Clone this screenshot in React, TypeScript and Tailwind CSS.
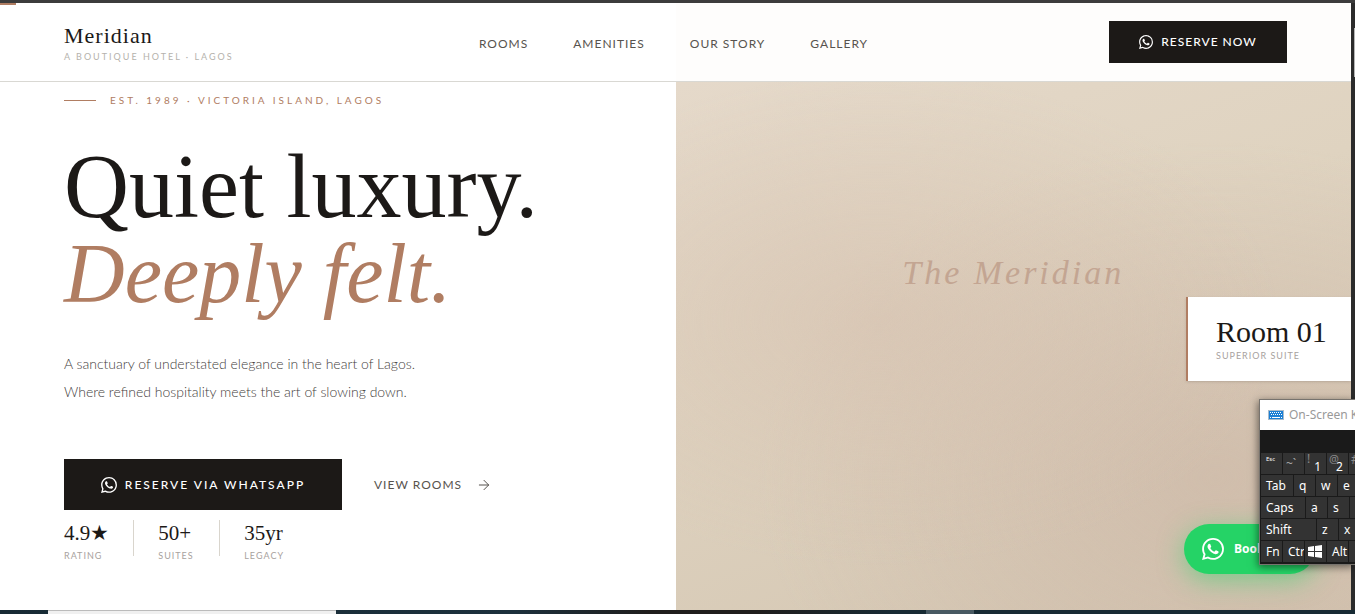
import { SiWhatsapp } from "react-icons/si";
import { ArrowRight } from "lucide-react";

const serif = "font-['Liberation_Serif',serif]";

const navItems = ["Rooms", "Amenities", "Our Story", "Gallery"];

const stats = [
  { value: "4.9★", label: "Rating" },
  { value: "50+", label: "Suites" },
  { value: "35yr", label: "Legacy" },
];

function Header() {
  return (
    <header className="relative flex h-[79px] shrink-0 items-center justify-between border-b border-[#d9d8d3] bg-[linear-gradient(90deg,#fff_50%,#fefdfc_50%)] px-16">
      <div className="absolute left-0 top-0 h-[2px] w-4 bg-[#b07d62]" />
      <a href="#top" className="flex w-[174px] flex-col pt-[2px]">
        <span className={`${serif} text-[22px] leading-[26px] tracking-[1px] text-[#1c1917]`}>Meridian</span>
        <span className="mt-[2px] whitespace-nowrap text-[9px] uppercase leading-[12px] tracking-[2px] text-[#b5b2ac]">
          A Boutique Hotel · Lagos
        </span>
      </a>
      <nav className="flex gap-[45px] pt-1">
        {navItems.map((item) => (
          <a key={item} href="#" className="whitespace-nowrap text-[12px] uppercase leading-[18px] tracking-[1px] text-[#57534e]">
            {item}
          </a>
        ))}
      </nav>
      <button className="flex h-[42px] w-[178px] items-center justify-center gap-2 whitespace-nowrap bg-[#1c1917] text-[12px] font-medium uppercase tracking-[1px] text-white">
        <SiWhatsapp size={14} />
        Reserve Now
      </button>
    </header>
  );
}

function Intro() {
  return (
    <section className="flex flex-col bg-white pl-16 pt-[9px]">
      <p className="flex items-center gap-[14px] whitespace-nowrap text-[10px] uppercase leading-[18px] tracking-[3px] text-[#b07d62]">
        <span className="h-px w-8 bg-[#b07d62]" />
        Est. 1989 · Victoria Island, Lagos
      </p>
      <h1 className={`${serif} mt-[34px] whitespace-nowrap text-[90px] leading-[87px] text-[#1c1917]`}>
        Quiet luxury.
        <em className="block text-[84px] text-[#b07d62]">Deeply felt.</em>
      </h1>
      <p className="mt-[33px] text-[14px] font-light leading-[28px] text-[#44403c]">
        A sanctuary of understated elegance in the heart of Lagos.
        <br />
        Where refined hospitality meets the art of slowing down.
      </p>
      <div className="mt-[53px] flex items-center gap-8">
        <button className="flex h-[51px] w-[278px] items-center justify-center gap-2 whitespace-nowrap bg-[#1c1917] text-[12px] font-medium uppercase tracking-[2px] text-white">
          <SiWhatsapp size={16} />
          Reserve via WhatsApp
        </button>
        <a href="#rooms" className="flex items-center gap-[14px] whitespace-nowrap text-[12px] uppercase tracking-[1px] text-[#57534e]">
          View Rooms
          <ArrowRight size={16} strokeWidth={1.5} />
        </a>
      </div>
      <div className="mt-[10px] flex gap-6">
        {stats.map((stat, index) => (
          <div key={stat.label} className="flex gap-6">
            {index > 0 && <span className="h-9 w-px bg-[#d9d5cd]" />}
            <dl className="flex min-w-[37px] flex-col-reverse justify-end pt-[1px]">
              <dt className="text-[9px] uppercase leading-[12px] tracking-[1px] text-[#a8a29e]">{stat.label}</dt>
              <dd className={`${serif} mb-[5px] text-[21px] leading-[24px] text-[#1c1917]`}>{stat.value}</dd>
            </dl>
          </div>
        ))}
      </div>
    </section>
  );
}

function Showcase() {
  return (
    <section className="relative flex flex-col overflow-hidden bg-[radial-gradient(ellipse_at_30%_45%,#d6c1b099,transparent_60%),radial-gradient(ellipse_at_80%_75%,#cdb8a7b3,transparent_60%),linear-gradient(160deg,#e5d9ca,#dfd3c0_40%,#d3c5b1)]">
      <p className={`${serif} mt-[171px] self-center text-[34px] italic leading-[40px] tracking-[3px] text-[#c3a592]`}>
        The Meridian
      </p>
      <div className="mt-1 flex h-[84px] w-[165px] flex-col self-end border-l-2 border-[#b07d62] bg-white pl-7 pt-[19px] shadow-sm">
        <span className={`${serif} whitespace-nowrap text-[30px] leading-[32px] text-[#1c1917]`}>Room 01</span>
        <span className="whitespace-nowrap text-[9px] uppercase leading-[16px] tracking-[1px] text-[#a8a29e]">Superior Suite</span>
      </div>
      <button className="absolute bottom-9 right-9 flex h-[50px] w-[131px] items-center gap-[10px] rounded-full bg-[#25d366] pl-[18px] font-['Open_Sans',sans-serif] text-[12px] font-bold text-white shadow-[0_6px_26px_#25d36680]">
        <SiWhatsapp size={22} />
        Book Now
      </button>
    </section>
  );
}

function KeyboardIcon() {
  return (
    <svg width="16" height="10" viewBox="0 0 16 10" className="shrink-0">
      <rect x="0.5" y="0.5" width="15" height="9" fill="#1b7fd4" stroke="#a9bccb" />
      <path d="M2 2.5h12M3 4.5h11" stroke="#fff" strokeDasharray="1 1" />
      <path d="M2 7.5h1M4 7.5h8M13 7.5h1" stroke="#fff" />
    </svg>
  );
}

function WindowsIcon() {
  return (
    <svg width="14" height="13" viewBox="0 0 14 13" fill="#fff">
      <path d="M0 2l6-1v5H0zM7 .9L14 0v6H7zM0 7h6v5l-6-1zM7 7h7v6l-7-1z" />
    </svg>
  );
}

const keyClass = "flex h-[21px] shrink-0 items-center overflow-hidden bg-[#333] text-left";
const rowClass = "flex gap-px";

function OnScreenKeyboard() {
  return (
    <aside className="absolute right-0 top-[399px] h-[166px] w-24 overflow-hidden border-y border-l border-[#77736e] bg-[#1a1a1a] font-['Noto_Sans',sans-serif] text-[12px] text-white shadow-[-1px_2px_8px_#0008]">
      <div className="flex h-[30px] items-center gap-[5px] whitespace-nowrap bg-white pl-2 text-[#999]">
        <KeyboardIcon />
        On-Screen Keyboard
      </div>
      <div className="mt-[23px] flex flex-col gap-px pl-px">
        <div className={rowClass}>
          <button className={`${keyClass} w-[21px] pb-[9px] pl-[5px] text-[6px]`}>Esc</button>
          <button className={`${keyClass} w-[21px] pl-[3px] text-[#aaa]`}>~`</button>
          <button className={`${keyClass} w-[21px] justify-between pl-[2px] pr-[5px]`}>
            <span className="pb-[10px] text-[#888]">!</span>
            <span className="pt-[7px]">1</span>
          </button>
          <button className={`${keyClass} w-[21px] pl-[2px]`}>
            <span className="pb-[8px] text-[11px] text-[#888]">@</span>
            <span className="-ml-[3px] pt-[7px]">2</span>
          </button>
          <button className={`${keyClass} w-[21px] pb-[8px] pl-[2px] text-[#888]`}>#</button>
        </div>
        <div className={rowClass}>
          <button className={`${keyClass} w-8 pl-[5px]`}>Tab</button>
          <button className={`${keyClass} w-[21px] pl-[5px]`}>q</button>
          <button className={`${keyClass} w-[21px] pl-[5px]`}>w</button>
          <button className={`${keyClass} w-[21px] pl-[5px]`}>e</button>
        </div>
        <div className={rowClass}>
          <button className={`${keyClass} w-11 pl-[5px]`}>Caps</button>
          <button className={`${keyClass} w-[21px] pl-[5px]`}>a</button>
          <button className={`${keyClass} w-[21px] pl-[5px]`}>s</button>
          <button className={`${keyClass} w-[21px] pl-[5px]`}>d</button>
        </div>
        <div className={rowClass}>
          <button className={`${keyClass} w-[55px] pl-[5px]`}>Shift</button>
          <button className={`${keyClass} w-[21px] pl-[5px]`}>z</button>
          <button className={`${keyClass} w-[21px] pl-[5px]`}>x</button>
        </div>
        <div className={rowClass}>
          <button className={`${keyClass} w-[21px] pl-[5px]`}>Fn</button>
          <button className={`${keyClass} w-[21px] pl-[5px]`}>Ctrl</button>
          <button className={`${keyClass} w-[21px] pl-[3px]`} aria-label="Windows"><WindowsIcon /></button>
          <button className={`${keyClass} w-[21px] pl-[5px]`}>Alt</button>
          <button className={`${keyClass} w-[21px]`} aria-label="Space" />
        </div>
      </div>
    </aside>
  );
}

export default function App() {
  return (
    <div id="top" className="relative flex min-h-screen flex-col overflow-hidden bg-white font-['Lato',sans-serif]">
      <div className="h-[3px] shrink-0 bg-[#3c3c3c]" />
      <div className="flex flex-1">
        <div className="flex flex-1 flex-col">
          <Header />
          <main className="grid flex-1 grid-cols-2">
            <Intro />
            <Showcase />
          </main>
        </div>
        <div className="flex w-1 flex-col items-end bg-[#2b2b2b] pt-[25px]">
          <div className="h-[49px] w-px bg-[#b5b5b5]" />
        </div>
      </div>
      <div className="flex h-1 shrink-0 bg-[linear-gradient(90deg,#172a34,#1c303c_38%,#1f1d1c_48%,#1f1d1c_56%,#172a34_66%)]">
        <div className="ml-12 w-72 border-t border-[#bbb] bg-[#f0f0f0]" />
        <div className="ml-[590px] w-12 bg-[#485962]" />
      </div>
      <OnScreenKeyboard />
    </div>
  );
}
